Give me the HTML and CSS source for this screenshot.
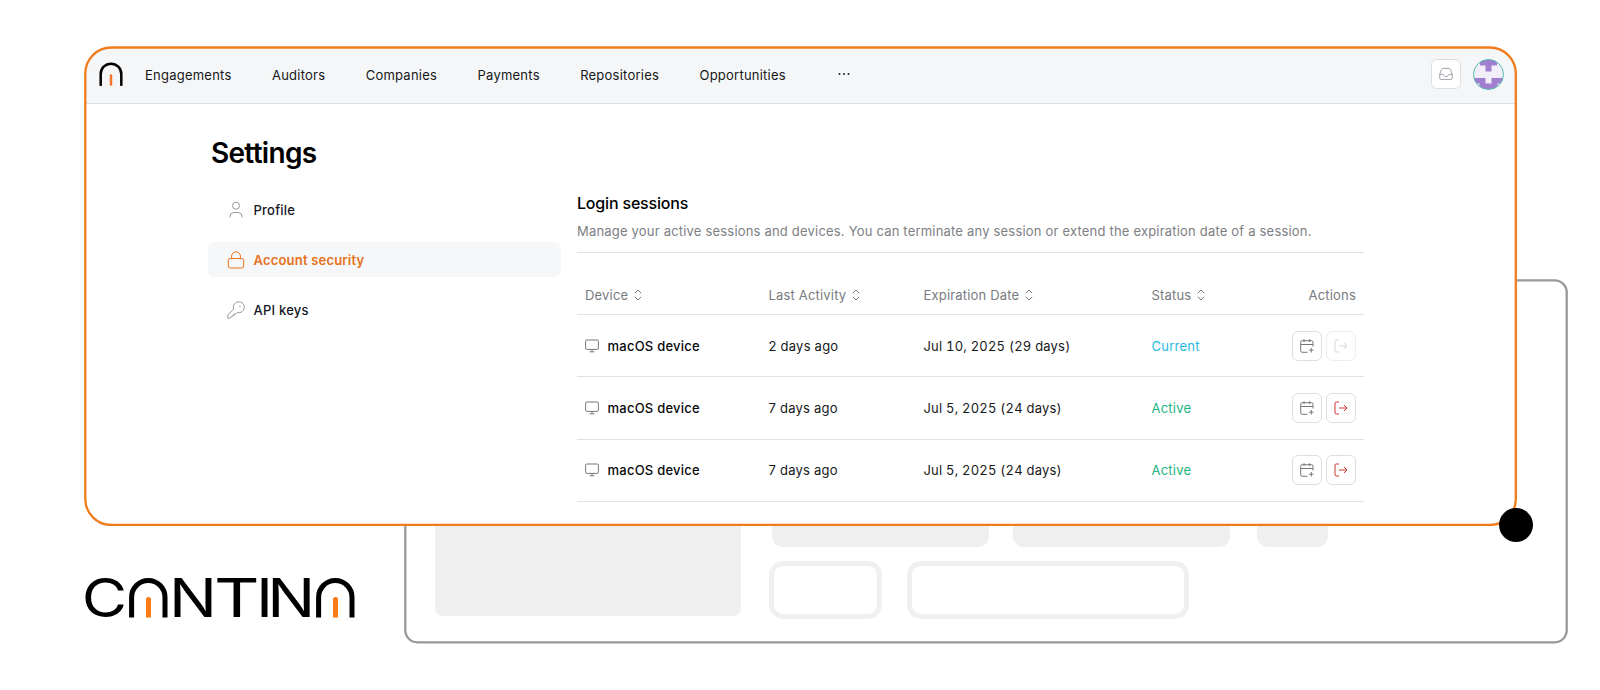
FILE: index.html
```
<!DOCTYPE html>
<html lang="en">
<head>
<meta charset="utf-8">
<title>Cantina – Settings</title>
<link rel="stylesheet" href="styles.css">
</head>
<body>
<svg class="defs" width="0" height="0" aria-hidden="true">
  <symbol id="sort" viewBox="0 0 8 12"><path d="M.8 4.2 4 1l3.200 3.200M.8 7.800 4 11l3.200-3.200"/></symbol>
  <symbol id="monitor" viewBox="0 0 14 14"><rect x=".6" y="1" width="12.800" height="9.400" rx="1.200"/><path d="M7 10.400v2.200M4.600 12.800h4.800"/></symbol>
  <symbol id="calendar" viewBox="0 0 14 14"><path d="M13 7.500V3.200A1.500 1.500 0 0 0 11.500 1.700h-9.300A1.500 1.500 0 0 0 .7 3.200v8.600a1.500 1.500 0 0 0 1.500 1.500H7.500M.7 5.500H13M4 .2v3M9.700 .2v3M11.300 9v4.500M9 11.200h4.500"/></symbol>
  <symbol id="exit" viewBox="0 0 14 14"><path d="M5 1H2.200A1.200 1.200 0 0 0 1 2.200v9.600A1.200 1.200 0 0 0 2.200 13H5M5 7h8M10 4l3 3-3 3"/></symbol>
</svg>
<main class="stage">
  <div class="backdrop">
    <svg class="frame"><rect x="1.300" y="1.300" width="1161.400" height="362" rx="12" fill="none" stroke="#999" stroke-width="2.300"/></svg>
    <div class="ph-block"></div>
    <div class="ph-right">
      <div class="ph-row"><i class="pill wide"></i><i class="pill wide"></i><i class="pill short"></i></div>
      <div class="ph-row boxes"><i class="box small"></i><i class="box large"></i></div>
    </div>
  </div>

  <section class="window">
    <header class="topbar">
      <svg class="mark" viewBox="0 0 24 24"><path d="M1.700 23V12a10.300 10.300 0 0 1 20.600 0v11" fill="none" stroke="#000" stroke-width="2.500" stroke-linecap="round"/><path d="M12 13.500v9" stroke="#f4762c" stroke-width="2.500" stroke-linecap="round"/></svg>
      <nav class="nav"><a>Engagements</a><a>Auditors</a><a>Companies</a><a>Payments</a><a>Repositories</a><a>Opportunities</a>
        <svg class="dots" viewBox="0 0 12 4"><circle cx="1.500" cy="2" r="1"/><circle cx="6" cy="2" r="1"/><circle cx="10.500" cy="2" r="1"/></svg>
      </nav>
      <button class="btn inbox" aria-label="Inbox"><svg class="icon" width="14" height="14" viewBox="0 0 14 14"><path d="M.7 7.400 2.600 2.300Q3 1.400 4 1.400h6q1 0 1.400.900l1.900 5.100v3.700q0 1.300-1.300 1.300H2Q.7 12.400.7 11.100zM.7 7.400H3.800q.600 0 .900.700.700 1.500 2.300 1.500t2.300-1.500q.300-.700.900-.700h3.100"/></svg></button>
      <svg class="avatar" viewBox="0 0 31 31"><defs><clipPath id="c"><circle cx="15.500" cy="15.500" r="15"/></clipPath></defs><g clip-path="url(#c)"><path fill="#f3effa" d="M0 0h31v31H0z"/><path fill="#a07fd0" d="M7 0h17v6.500h-5.500V12.500h-6V6.500H7zM0 19h12.500v5.500h6V19H31v12H0z"/><path fill="#f3effa" d="M0 24.500h6.500V31H0zM24.500 24.500H31V31h-6.500z"/></g><circle cx="15.500" cy="15.500" r="15" fill="none" stroke="#55b9ae"/></svg>
    </header>

    <div class="content">
      <aside class="side">
        <h1>Settings</h1>
        <a class="item"><svg class="icon" width="18" height="18" viewBox="0 0 18 18"><circle cx="9" cy="4.700" r="3.500"/><path d="M3 16.500v-1.300a3.700 3.700 0 0 1 3.700-3.700h4.600a3.700 3.700 0 0 1 3.700 3.700v1.300"/></svg>Profile</a>
        <a class="item active"><svg class="icon" width="18" height="18" viewBox="0 0 18 18"><rect x="1.300" y="7.500" width="15.400" height="9.500" rx="2"/><path d="M4.600 7.500V5.200a4.400 4.400 0 0 1 8.800 0v2.300"/></svg>Account security</a>
        <a class="item"><svg class="icon" width="18" height="18" viewBox="0 0 18 18"><path d="M6.600 8A5.500 5.500 0 1 1 10.200 11.500L8.600 13.100H6.700v1.900H4.900L3.200 17.200H.8V14z"/><path d="M12.600 5.400h.800" stroke-linecap="round"/></svg>API keys</a>
      </aside>

      <section class="sessions">
        <h2>Login sessions</h2>
        <p class="desc">Manage your active sessions and devices. You can terminate any session or extend the expiration date of a session.</p>
        <div class="row head">
          <span>Device<svg class="sort"><use href="#sort"/></svg></span><span>Last Activity<svg class="sort"><use href="#sort"/></svg></span><span>Expiration Date<svg class="sort"><use href="#sort"/></svg></span><span>Status<svg class="sort"><use href="#sort"/></svg></span><span class="end">Actions</span>
        </div>
        <div class="row">
          <span class="device"><svg class="mon"><use href="#monitor"/></svg>macOS device</span><span>2 days ago</span><span class="date">Jul 10, 2025 (29 days)</span><span class="current">Current</span>
          <span class="end"><button class="btn"><svg class="act"><use href="#calendar"/></svg></button><button class="btn disabled"><svg class="act"><use href="#exit"/></svg></button></span>
        </div>
        <div class="row">
          <span class="device"><svg class="mon"><use href="#monitor"/></svg>macOS device</span><span>7 days ago</span><span class="date">Jul 5, 2025 (24 days)</span><span class="ok">Active</span>
          <span class="end"><button class="btn"><svg class="act"><use href="#calendar"/></svg></button><button class="btn danger"><svg class="act"><use href="#exit"/></svg></button></span>
        </div>
        <div class="row">
          <span class="device"><svg class="mon"><use href="#monitor"/></svg>macOS device</span><span>7 days ago</span><span class="date">Jul 5, 2025 (24 days)</span><span class="ok">Active</span>
          <span class="end"><button class="btn"><svg class="act"><use href="#calendar"/></svg></button><button class="btn danger"><svg class="act"><use href="#exit"/></svg></button></span>
        </div>
      </section>
    </div>
    <svg class="frame"><rect x="1.300" y="1.500" width="1430.500" height="477.500" rx="26" fill="none" stroke="#f07c1c" stroke-width="2.300"/></svg>
    <i class="handle"></i>
  </section>

  <svg class="wordmark" viewBox="0 0 272 40" role="img" aria-label="Cantina">
    <g class="letters">
      <text transform="translate(-3.300 39.300) scale(1.160 1)">C</text>
      <text transform="translate(84 39.300) scale(1.190 1)">N</text>
      <text transform="translate(129 39.300) scale(1.320 1)">T</text>
      <text transform="translate(171 39.300) scale(1.190 1)" x="0 9.500">IN</text>
    </g>
    <g fill="none" stroke-width="5"><path stroke="#000" d="M46.600 39.500V19.200a16.700 16.700 0 0 1 33.400 0v20.300M233.600 39.500V19.200a16.700 16.700 0 0 1 33.400 0v20.300"/></g>
    <path fill="#f97b16" d="M61 39.500V21.500a2.500 2.500 0 0 1 5 0v18zM248 39.500V21.500a2.500 2.500 0 0 1 5 0v18z"/>
  </svg>
</main>
</body>
</html>
```
FILE: styles.css
```
* { box-sizing: border-box; }
body { margin: 0; background: #fff; color: #17181a; font: 400 13px/20px Inter, sans-serif; letter-spacing: .235px; }
h1, h2, p { margin: 0; }
button { font: inherit; padding: 0; }
.defs { position: absolute; }
.stage { position: relative; width: 1600px; height: 690px; padding: 46px 0 0 84px; overflow: hidden; }
.frame { position: absolute; inset: 0; width: 100%; height: 100%; pointer-events: none; }

/* wireframe panel behind the window */
.backdrop { position: absolute; left: 404px; top: 279px; width: 1164px; height: 365px; display: flex; align-items: flex-end; gap: 28px; padding: 0 0 28px 31px; }
.ph-block { width: 306px; height: 110px; border-radius: 8px; background: #efefef; }
.ph-row { display: flex; gap: 24px; padding-left: 3px; }
.ph-row.boxes { gap: 25px; padding: 0; margin: 14px 0 -3px; }
.pill { height: 40px; border-radius: 11px; background: #efefef; }
.wide { width: 217px; }
.short { width: 71px; margin-left: 3px; }
.box { height: 58px; border: 5px solid #f0f0f0; border-radius: 14px; }
.small { width: 113px; }
.large { width: 282px; }

/* application window */
.window { position: relative; width: 1433px; height: 480px; padding: 2px; border-radius: 28px; background: #fff; }
.topbar { display: flex; align-items: center; height: 56px; padding: 0 11px 3px 13px; border-bottom: 1px solid #dcdfe1; border-radius: 25px 25px 0 0; background: #f4f6f7; }
.mark { width: 24px; height: 24px; margin-right: 22px; }
.nav { display: flex; align-items: center; gap: 40.400px; flex: 1; padding-top: 1px; }
.dots { width: 12px; height: 4px; margin: -2px 0 0 12px; fill: #222; }
.btn { display: inline-flex; align-items: center; justify-content: center; width: 30px; height: 30px; border: 1px solid #dcdfe2; border-radius: 6px; background: #fff; color: #73777b; }
.inbox { color: #9da3a8; margin-right: 12px; }
.avatar { width: 31px; height: 31px; }
.icon, .sort, .mon, .act { fill: none; stroke: currentColor; stroke-width: 1; stroke-linejoin: round; }

.content { display: grid; grid-template-columns: 353px 787px; column-gap: 16px; padding: 33px 0 0 122px; }
h1 { padding-left: 3px; font-size: 28px; line-height: 32px; font-weight: 600; letter-spacing: -.7px; margin-bottom: 23px; color: #000; }
.item { display: flex; align-items: center; gap: 9px; height: 35px; padding-left: 18.500px; margin-bottom: 15px; border-radius: 6px; font-weight: 500; letter-spacing: .23px; color: #14171f; }
.item .icon { color: #94999d; }
.item.active, .item.active .icon { color: #e8701a; }
.item.active { background: #f5f7f8; font-weight: 600; letter-spacing: .2px; }
.sessions { padding-top: 54px; }
h2 { font-size: 16px; line-height: 24px; font-weight: 500; letter-spacing: -.18px; color: #000; }
.desc { margin-top: 6px; padding-bottom: 11px; border-bottom: 1px solid #dfe1e2; color: #7c8084; letter-spacing: .195px; white-space: nowrap; }

.row { display: grid; grid-template-columns: 183.500px 155px 228px 1fr auto; align-items: center; height: 62.300px; padding: 0 8px; border-bottom: 1px solid #dfe1e2; }
.row.head { height: 62px; padding-top: 22px; color: #777b7f; letter-spacing: .18px; }
.row span { display: flex; align-items: center; white-space: nowrap; }
.sort { width: 8px; height: 12px; margin-left: 6px; }
.device { gap: 8.500px; font-weight: 500; color: #08090b; }
.mon { width: 14px; height: 14px; color: #777; }
.act { width: 14px; height: 14px; }
.date { font-variant-numeric: tabular-nums; letter-spacing: .2px; }
.end { gap: 4.500px; }
.current { color: #1fb9e0; }
.ok { color: #22b580; }
.disabled { color: #d6d8da; border-color: #eceeef; }
.danger { color: #c9342f; }
.handle { position: absolute; right: -15.500px; bottom: -16px; width: 34px; height: 34px; border-radius: 50%; background: #000; }

.wordmark { display: block; width: 272px; height: 40px; margin: 52px 0 0 .5px; overflow: visible; }
.letters { font: 400 53.500px Inter, sans-serif; letter-spacing: 0; fill: #000; }
```
